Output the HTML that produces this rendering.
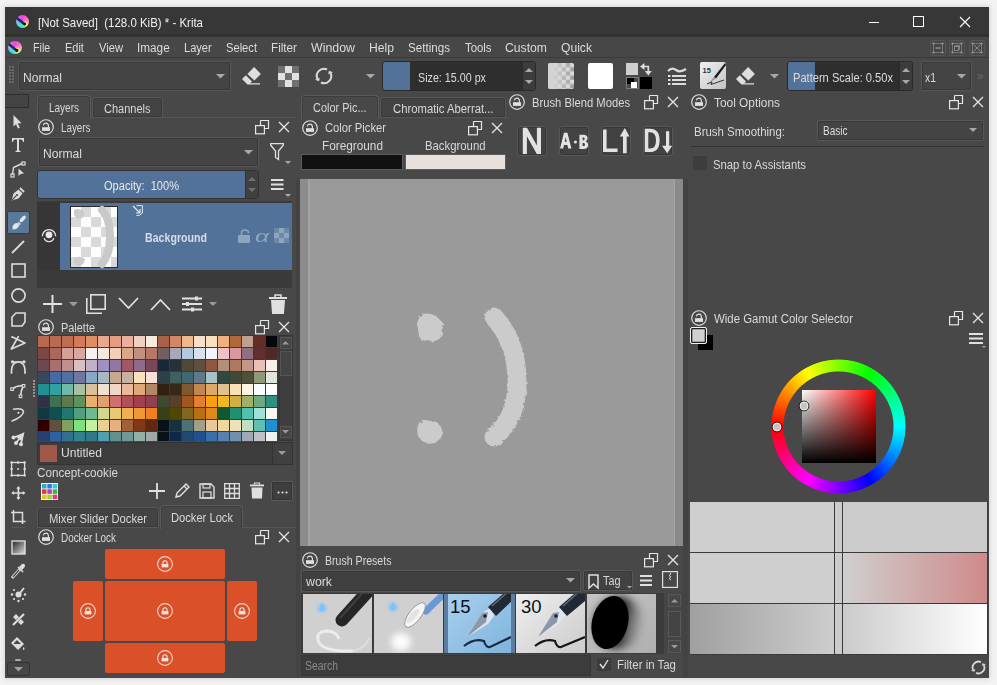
<!DOCTYPE html><html><head><meta charset="utf-8"><style>
*{margin:0;padding:0;box-sizing:border-box}
html,body{width:997px;height:685px;overflow:hidden;background:#f2f2f2;font-family:"Liberation Sans",sans-serif}
div{position:absolute}
.t{white-space:nowrap;line-height:1;transform-origin:0 0}
svg{position:absolute;overflow:visible}
</style></head><body><div style="left:0px;top:0px;width:997px;height:685px;background:#f3f3f3"></div><div style="left:5px;top:7px;width:984px;height:671px;background:#484848;box-shadow:0 0 5px 1px rgba(0,0,0,0.12)"></div><div style="left:5px;top:7px;width:984px;height:27px;background:#373737"></div><div style="left:5px;top:34px;width:984px;height:3px;background:#323232"></div><div style="left:5px;top:37px;width:984px;height:20px;background:#474747"></div><div style="left:5px;top:57px;width:984px;height:1px;background:#3b3b3b"></div><div style="left:15.5px;top:15px;width:13px;height:13px;border-radius:50%;background:conic-gradient(#ff38e8 0deg,#f080c8 70deg,#f4f070 130deg,#50e8b0 180deg,#40d8f0 230deg,#a8a8f8 290deg,#e050f0 340deg,#ff38e8 360deg)"></div><svg style="left:15.5px;top:15px;" width="13" height="13" viewBox="0 0 13 13"><path d="M1.56 3.6400000000000006L8.06 8.84" stroke="#2a2850" stroke-width="2.6" stroke-linecap="round"/><circle cx="8.58" cy="9.1" r="1.43" fill="#111"/></svg><div class="t" style="left:38.00px;top:15.5px;font-size:13px;color:#f0f0f0;transform:scaleX(0.8817);">[Not Saved]&nbsp; (128.0 KiB) * - Krita</div><div style="left:869px;top:22px;width:10px;height:1px;background:#fff"></div><div style="left:913px;top:16px;width:11px;height:11px;border:1px solid #fff"></div><svg style="left:960px;top:17px;" width="10" height="10" viewBox="0 0 10 10"><path d="M0 0L10 10M10 0L0 10" stroke="#fff" stroke-width="1.1"/></svg><div style="left:8px;top:40.5px;width:13.5px;height:13.5px;border-radius:50%;background:conic-gradient(#ff38e8 0deg,#f080c8 70deg,#f4f070 130deg,#50e8b0 180deg,#40d8f0 230deg,#a8a8f8 290deg,#e050f0 340deg,#ff38e8 360deg)"></div><svg style="left:8px;top:40.5px;" width="13.5" height="13.5" viewBox="0 0 13.5 13.5"><path d="M1.6199999999999999 3.7800000000000002L8.37 9.180000000000001" stroke="#2a2850" stroke-width="2.7" stroke-linecap="round"/><circle cx="8.91" cy="9.45" r="1.485" fill="#111"/></svg><div class="t" style="left:32.50px;top:42px;font-size:12.5px;color:#dcdcdc;transform:scaleX(0.8533);">File</div><div class="t" style="left:64.50px;top:42px;font-size:12.5px;color:#dcdcdc;transform:scaleX(0.8772);">Edit</div><div class="t" style="left:98.50px;top:42px;font-size:12.5px;color:#dcdcdc;transform:scaleX(0.8930);">View</div><div class="t" style="left:137.30px;top:42px;font-size:12.5px;color:#dcdcdc;transform:scaleX(0.9410);">Image</div><div class="t" style="left:184.30px;top:42px;font-size:12.5px;color:#dcdcdc;transform:scaleX(0.8855);">Layer</div><div class="t" style="left:226.00px;top:42px;font-size:12.5px;color:#dcdcdc;transform:scaleX(0.8921);">Select</div><div class="t" style="left:271.00px;top:42px;font-size:12.5px;color:#dcdcdc;transform:scaleX(0.9359);">Filter</div><div class="t" style="left:311.00px;top:42px;font-size:12.5px;color:#dcdcdc;transform:scaleX(0.9895);">Window</div><div class="t" style="left:369.00px;top:42px;font-size:12.5px;color:#dcdcdc;transform:scaleX(0.9721);">Help</div><div class="t" style="left:408.00px;top:42px;font-size:12.5px;color:#dcdcdc;transform:scaleX(0.9298);">Settings</div><div class="t" style="left:464.50px;top:42px;font-size:12.5px;color:#dcdcdc;transform:scaleX(0.9079);">Tools</div><div class="t" style="left:505.00px;top:42px;font-size:12.5px;color:#dcdcdc;transform:scaleX(0.9750);">Custom</div><div class="t" style="left:561.00px;top:42px;font-size:12.5px;color:#dcdcdc;transform:scaleX(0.9702);">Quick</div><div style="left:929.5px;top:39.5px;width:16px;height:16px;border:1px solid #555;border-radius:2px;background:#474747"></div><svg style="left:929.5px;top:39.5px;" width="16" height="16" viewBox="0 0 16 16"><rect x="3.5" y="3.5" width="9" height="9" stroke="#7a7a7a" stroke-width="0.9" fill="none"/><g fill="#9a9a9a"><circle cx="3.5" cy="3.5" r="1.1"/><circle cx="12.5" cy="3.5" r="1.1"/><circle cx="3.5" cy="12.5" r="1.1"/><circle cx="12.5" cy="12.5" r="1.1"/></g><rect x="5.5" y="7.3" width="5" height="1.5" fill="#8c8c8c"/></svg><div style="left:948.5px;top:39.5px;width:16px;height:16px;border:1px solid #555;border-radius:2px;background:#474747"></div><svg style="left:948.5px;top:39.5px;" width="16" height="16" viewBox="0 0 16 16"><rect x="3.5" y="3.5" width="9" height="9" stroke="#7a7a7a" stroke-width="0.9" fill="none"/><g fill="#9a9a9a"><circle cx="3.5" cy="3.5" r="1.1"/><circle cx="12.5" cy="3.5" r="1.1"/><circle cx="3.5" cy="12.5" r="1.1"/><circle cx="12.5" cy="12.5" r="1.1"/></g><rect x="5.5" y="6.5" width="4" height="4" stroke="#8c8c8c" stroke-width="0.9" fill="none"/><path d="M6.5 6V5.5H10.5V9.5H10" stroke="#8c8c8c" stroke-width="0.9" fill="none"/></svg><div style="left:969px;top:39.5px;width:16px;height:16px;border:1px solid #555;border-radius:2px;background:#474747"></div><svg style="left:969px;top:39.5px;" width="16" height="16" viewBox="0 0 16 16"><rect x="3.5" y="3.5" width="9" height="9" stroke="#7a7a7a" stroke-width="0.9" fill="none"/><g fill="#9a9a9a"><circle cx="3.5" cy="3.5" r="1.1"/><circle cx="12.5" cy="3.5" r="1.1"/><circle cx="3.5" cy="12.5" r="1.1"/><circle cx="12.5" cy="12.5" r="1.1"/></g><path d="M4.5 4.5L11.5 11.5M11.5 4.5L4.5 11.5" stroke="#8c8c8c" stroke-width="1"/></svg><div style="left:9px;top:66px;width:2px;height:2px;background:#6a6a6a"></div><div style="left:12px;top:66px;width:2px;height:2px;background:#6a6a6a"></div><div style="left:9px;top:69px;width:2px;height:2px;background:#6a6a6a"></div><div style="left:12px;top:69px;width:2px;height:2px;background:#6a6a6a"></div><div style="left:9px;top:72px;width:2px;height:2px;background:#6a6a6a"></div><div style="left:12px;top:72px;width:2px;height:2px;background:#6a6a6a"></div><div style="left:9px;top:75px;width:2px;height:2px;background:#6a6a6a"></div><div style="left:12px;top:75px;width:2px;height:2px;background:#6a6a6a"></div><div style="left:9px;top:78px;width:2px;height:2px;background:#6a6a6a"></div><div style="left:12px;top:78px;width:2px;height:2px;background:#6a6a6a"></div><div style="left:9px;top:81px;width:2px;height:2px;background:#6a6a6a"></div><div style="left:12px;top:81px;width:2px;height:2px;background:#6a6a6a"></div><div style="left:18px;top:61px;width:213px;height:30px;background:#444444;border:1px solid #575757;border-radius:2px;box-shadow:inset 0 0 0 1px #383838"></div><div class="t" style="left:22.50px;top:71.5px;font-size:12px;color:#dcdcdc;transform:scaleX(1.0085);">Normal</div><svg style="left:215.5px;top:73.75px;" width="9" height="4.5" viewBox="0 0 9 4.5"><path d="M0 0L9 0L4.5 4.5Z" fill="#a8a8a8"/></svg><svg style="left:238px;top:62px;" width="28" height="28" viewBox="0 0 28 28"><path d="M16.1 4.9L22.9 11.9L16.4 18.6L9.4 11.9Z" fill="#dedede"/><path d="M7.8 13.3L14 19.5L12.3 21.2L22 21.2L22 22.4L9.5 22.4L4 17Z" fill="#dedede"/></svg><div style="left:278px;top:66px;width:7px;height:7px;background:#707070"></div><div style="left:285px;top:66px;width:7px;height:7px;background:#e2e2e2"></div><div style="left:292px;top:66px;width:7px;height:7px;background:#707070"></div><div style="left:278px;top:73px;width:7px;height:7px;background:#e2e2e2"></div><div style="left:285px;top:73px;width:7px;height:7px;background:#707070"></div><div style="left:292px;top:73px;width:7px;height:7px;background:#e2e2e2"></div><div style="left:278px;top:80px;width:7px;height:7px;background:#707070"></div><div style="left:285px;top:80px;width:7px;height:7px;background:#e2e2e2"></div><div style="left:292px;top:80px;width:7px;height:7px;background:#707070"></div><svg style="left:315px;top:67px;" width="18" height="18" viewBox="0 0 18 18"><path d="M12.04 2.47A7.2 7.2 0 0 0 2.47 12.04" stroke="#dcdcdc" stroke-width="2" fill="none"/><path d="M4.09 14.27L-0.02 12.83L4.77 10.80Z" fill="#dcdcdc"/><path d="M5.96 15.53A7.2 7.2 0 0 0 15.53 5.96" stroke="#dcdcdc" stroke-width="2" fill="none"/><path d="M13.91 3.73L18.02 5.17L13.23 7.20Z" fill="#dcdcdc"/></svg><svg style="left:365.5px;top:73.75px;" width="9" height="4.5" viewBox="0 0 9 4.5"><path d="M0 0L9 0L4.5 4.5Z" fill="#a8a8a8"/></svg><div style="left:382px;top:61px;width:154px;height:30px;background:#2e2e2e;border:1px solid #2a2a2a;border-radius:3px"></div><div style="left:383px;top:62px;width:27px;height:28px;background:#52729a;border-radius:2px 0 0 2px"></div><div class="t" style="left:418.00px;top:72px;font-size:12px;color:#dcdcdc;transform:scaleX(0.8940);">Size: 15.00 px</div><div style="left:522px;top:62px;width:13px;height:28px;background:#3c3c3c;border-left:1px solid #2a2a2a"></div><svg style="left:524.5px;top:68.0px;" width="8" height="4.0" viewBox="0 0 8 4.0"><path d="M0 4.0L8 4.0L4.0 0Z" fill="#a8a8a8"/></svg><svg style="left:524.5px;top:80.0px;" width="8" height="4.0" viewBox="0 0 8 4.0"><path d="M0 0L8 0L4.0 4.0Z" fill="#a8a8a8"/></svg><svg style="left:548px;top:63px;" width="26" height="26" viewBox="0 0 26 26"><defs><pattern id="pc" width="8.4" height="8.4" patternUnits="userSpaceOnUse" x="1" y="0"><rect width="8.4" height="8.4" fill="#dcdcdc"/><rect width="4.2" height="4.2" fill="#9c9c9c"/><rect x="4.2" y="4.2" width="4.2" height="4.2" fill="#9c9c9c"/></pattern><linearGradient id="pcg" x1="0" x2="1"><stop offset="0" stop-color="#d4d4d4" stop-opacity="1"/><stop offset="0.25" stop-color="#d4d4d4" stop-opacity="0.9"/><stop offset="1" stop-color="#d4d4d4" stop-opacity="0"/></linearGradient></defs><rect width="26" height="26" rx="2" fill="url(#pc)"/><rect width="26" height="26" rx="2" fill="url(#pcg)"/></svg><div style="left:588px;top:63px;width:25px;height:26px;background:#fff;border-radius:2px"></div><div style="left:626px;top:63px;width:12px;height:12px;background:#cfcfcf"></div><div style="left:626px;top:77px;width:13px;height:12px;border:1px solid #7a7a7a"></div><div style="left:627px;top:78px;width:7px;height:6px;background:#000"></div><div style="left:631px;top:82px;width:6px;height:6px;background:#fff"></div><div style="left:640px;top:77px;width:12px;height:12px;background:#000"></div><svg style="left:639px;top:62px;" width="14" height="14" viewBox="0 0 14 14"><path d="M1 4.5L5.5 1V8Z" fill="#dcdcdc"/><path d="M5 4.5H9.3V9.5" stroke="#dcdcdc" stroke-width="1.7" fill="none"/><path d="M9.3 13.5L5.8 9H12.8Z" fill="#dcdcdc"/></svg><svg style="left:667px;top:66px;" width="21" height="19" viewBox="0 0 21 19"><path d="M1 5 Q5 1 9 4 T19 3" stroke="#dcdcdc" stroke-width="2.2" fill="none"/><rect x="1" y="9" width="2.5" height="2" fill="#dcdcdc"/><rect x="5" y="9" width="14" height="2" fill="#dcdcdc"/><rect x="1" y="13" width="2.5" height="2" fill="#dcdcdc"/><rect x="5" y="13" width="14" height="2" fill="#dcdcdc"/><rect x="1" y="17" width="2.5" height="2" fill="#dcdcdc"/><rect x="5" y="17" width="14" height="2" fill="#dcdcdc"/></svg><svg style="left:700px;top:62px;" width="26" height="27" viewBox="0 0 26 27"><defs><linearGradient id="bp" x1="0" y1="0" x2="1" y2="1"><stop offset="0" stop-color="#f0f0f0"/><stop offset="1" stop-color="#c4c4c4"/></linearGradient></defs><rect width="26" height="27" rx="2" fill="url(#bp)"/><text x="2.5" y="10.5" font-size="7.5" font-weight="bold" font-family="Liberation Sans" fill="#333">15</text><path d="M25 1L14 15L16 16.5L26 3Z" fill="#1a1a1a"/><path d="M14 15L8.5 21.5L16 16.5Z" fill="#9a9a9a"/><path d="M7 22L12 20L11 22.5L24 18" stroke="#333" stroke-width="1" fill="none"/></svg><svg style="left:732px;top:62px;" width="28" height="28" viewBox="0 0 28 28"><path d="M16.1 4.9L22.9 11.9L16.4 18.6L9.4 11.9Z" fill="#dedede"/><path d="M7.8 13.3L14 19.5L12.3 21.2L22 21.2L22 22.4L9.5 22.4L4 17Z" fill="#dedede"/></svg><svg style="left:769.5px;top:73.75px;" width="9" height="4.5" viewBox="0 0 9 4.5"><path d="M0 0L9 0L4.5 4.5Z" fill="#a8a8a8"/></svg><div style="left:787px;top:61px;width:126px;height:30px;background:#2e2e2e;border:1px solid #2a2a2a;border-radius:3px"></div><div style="left:788px;top:62px;width:27px;height:28px;background:#52729a;border-radius:2px 0 0 2px"></div><div class="t" style="left:793.00px;top:72px;font-size:12px;color:#dcdcdc;transform:scaleX(0.9253);">Pattern Scale: 0.50x</div><div style="left:899px;top:62px;width:13px;height:28px;background:#3c3c3c;border-left:1px solid #2a2a2a"></div><svg style="left:901.5px;top:68.0px;" width="8" height="4.0" viewBox="0 0 8 4.0"><path d="M0 4.0L8 4.0L4.0 0Z" fill="#a8a8a8"/></svg><svg style="left:901.5px;top:80.0px;" width="8" height="4.0" viewBox="0 0 8 4.0"><path d="M0 0L8 0L4.0 4.0Z" fill="#a8a8a8"/></svg><div style="left:921px;top:61px;width:51px;height:30px;background:#444444;border:1px solid #575757;border-radius:2px;box-shadow:inset 0 0 0 1px #383838"></div><div class="t" style="left:925.00px;top:72px;font-size:12px;color:#dcdcdc;transform:scaleX(0.8670);">x1</div><svg style="left:956.5px;top:73.75px;" width="9" height="4.5" viewBox="0 0 9 4.5"><path d="M0 0L9 0L4.5 4.5Z" fill="#a8a8a8"/></svg><div class="t" style="left:977.00px;top:70px;font-size:12px;color:#6a6a6a;">&raquo;</div><div style="left:5px;top:94px;width:24px;height:14px;border:1px solid #2e2e2e;border-left:none;background:#444"></div><div style="left:7px;top:211px;width:23px;height:23px;background:#5a7898;border:1px solid #2e3c4c;border-radius:2px"></div><svg style="left:8px;top:111.0px;" width="20" height="20" viewBox="0 0 20 20"><path d="M5.5 4L5.5 15.5L8 13.2L10 17.5L11.8 16.7L9.8 12.3L13.5 12.3Z" fill="#dcdcdc"/></svg><svg style="left:8px;top:135.0px;" width="20" height="20" viewBox="0 0 20 20"><path d="M4 3H16V7H15Q15 4.5 13 4.5H11V15.5L12.5 16V17H7.5V16L9 15.5V4.5H7Q5 4.5 5 7H4Z" fill="#dcdcdc"/></svg><svg style="left:8px;top:159.0px;" width="20" height="20" viewBox="0 0 20 20"><path d="M4.5 15.5L5.5 8.5L14 4.5" stroke="#dcdcdc" stroke-width="1.4" fill="none"/><rect x="3" y="15" width="3" height="3" stroke="#dcdcdc" stroke-width="1.2" fill="none"/><rect x="14" y="3" width="3" height="3" stroke="#dcdcdc" stroke-width="1.2" fill="none"/><path d="M10.5 9.5L10.5 17L12.5 15L16 14.5Z" fill="#dcdcdc"/></svg><svg style="left:8px;top:183.0px;" width="20" height="20" viewBox="0 0 20 20"><path d="M3.5 17.5L5.5 10.5L10.5 6.5L14.5 10.5L10.5 15.5Z" fill="#dcdcdc"/><path d="M4 17L8.3 12.7" stroke="#484848" stroke-width="1.1"/><circle cx="9" cy="12" r="1.1" fill="#484848"/><path d="M12 5L16 9" stroke="#dcdcdc" stroke-width="1.8"/></svg><svg style="left:8.5px;top:212.0px;" width="20" height="20" viewBox="0 0 20 20"><path d="M3.5 17.5Q3 13 6 11.5Q8 10.5 9.5 12Q10.5 13.5 9.5 15Q7.5 17.5 3.5 17.5Z" fill="#dfe6ee"/><path d="M9.2 10.6L11.2 12.6" stroke="#dfe6ee" stroke-width="1.6"/><path d="M10.5 9.5Q11 6.5 13.5 4.5Q15.5 3 16.5 4Q17.5 5 16 7Q14 9.5 12 10.5Z" fill="#dfe6ee"/></svg><svg style="left:8px;top:237.0px;" width="20" height="20" viewBox="0 0 20 20"><path d="M4 16L16 4" stroke="#dcdcdc" stroke-width="1.8"/></svg><svg style="left:8px;top:260.0px;" width="20" height="20" viewBox="0 0 20 20"><rect x="4" y="4" width="13" height="13" stroke="#dcdcdc" stroke-width="1.6" fill="none"/></svg><svg style="left:8px;top:285.0px;" width="20" height="20" viewBox="0 0 20 20"><circle cx="10.5" cy="10.5" r="6.6" stroke="#dcdcdc" stroke-width="1.6" fill="none"/></svg><svg style="left:8px;top:309.0px;" width="20" height="20" viewBox="0 0 20 20"><path d="M4 8L8 4H17V13L14 17H4Z" stroke="#dcdcdc" stroke-width="1.6" fill="none"/></svg><svg style="left:8px;top:333.0px;" width="20" height="20" viewBox="0 0 20 20"><path d="M3.3 3.5L17 10L3.3 16L10.6 3.2" stroke="#dcdcdc" stroke-width="1.7" fill="none" stroke-linejoin="round"/></svg><svg style="left:8px;top:357.0px;" width="20" height="20" viewBox="0 0 20 20"><path d="M3.5 16.8Q3 5 10.3 5Q17.5 5 17 16.8" stroke="#dcdcdc" stroke-width="1.7" fill="none"/><path d="M4.5 4.8H16" stroke="#dcdcdc" stroke-width="1"/><circle cx="4.5" cy="4.8" r="1.6" fill="#dcdcdc"/><circle cx="16" cy="4.8" r="1.6" fill="#dcdcdc"/></svg><svg style="left:8px;top:380.0px;" width="20" height="20" viewBox="0 0 20 20"><path d="M4 9.3Q9 5 15.4 6Q13 10 12.6 15.8" stroke="#dcdcdc" stroke-width="1.6" fill="none"/><rect x="2.8" y="7.8" width="2.6" height="2.6" stroke="#dcdcdc" stroke-width="1.1" fill="#484848"/><rect x="14.2" y="4.5" width="2.6" height="2.6" stroke="#dcdcdc" stroke-width="1.1" fill="#484848"/><rect x="11.2" y="15" width="2.6" height="2.6" stroke="#dcdcdc" stroke-width="1.1" fill="#484848"/></svg><svg style="left:8px;top:405.0px;" width="20" height="20" viewBox="0 0 20 20"><path d="M5 4.3Q14 2.5 15.5 6.5Q15 12 3.5 16.2" stroke="#dcdcdc" stroke-width="1.6" fill="none"/><circle cx="10.4" cy="7.8" r="1.1" fill="#dcdcdc"/></svg><svg style="left:8px;top:429.0px;" width="20" height="20" viewBox="0 0 20 20"><path d="M16.5 3L14 12L8 8Z" fill="#dcdcdc"/><path d="M15 5L5.5 8.5M15 5L8 14M15 5L13 15" stroke="#dcdcdc" stroke-width="1.8"/><circle cx="5.5" cy="8.5" r="2" fill="#dcdcdc"/><circle cx="8" cy="14" r="2" fill="#dcdcdc"/><circle cx="13" cy="15.3" r="2" fill="#dcdcdc"/></svg><svg style="left:8px;top:459.0px;" width="20" height="20" viewBox="0 0 20 20"><rect x="3.6" y="3.5" width="13" height="12.9" stroke="#dcdcdc" stroke-width="1.3" fill="none"/><g fill="#dcdcdc"><circle cx="3.6" cy="3.5" r="1.2"/><circle cx="3.6" cy="10" r="1.2"/><circle cx="3.6" cy="16.4" r="1.2"/><circle cx="10.1" cy="3.5" r="1.2"/><circle cx="10.1" cy="16.4" r="1.2"/><circle cx="16.6" cy="3.5" r="1.2"/><circle cx="16.6" cy="10" r="1.2"/><circle cx="16.6" cy="16.4" r="1.2"/><circle cx="10.1" cy="10" r="1"/></g></svg><svg style="left:8px;top:483.0px;" width="20" height="20" viewBox="0 0 20 20"><path d="M10.4 4.5V15.5M4.5 10H16.3" stroke="#dcdcdc" stroke-width="1.7"/><path d="M10.4 3L8.3 5.8H12.5ZM10.4 17L8.3 14.2H12.5ZM3.3 10L6 7.9V12.1ZM17.5 10L14.8 7.9V12.1Z" fill="#dcdcdc"/></svg><svg style="left:8px;top:507.0px;" width="20" height="20" viewBox="0 0 20 20"><path d="M5.5 3V14.5H17.5M3 5.5H14.5V17" stroke="#dcdcdc" stroke-width="1.5" fill="none"/></svg><svg style="left:8px;top:537.0px;" width="20" height="20" viewBox="0 0 20 20"><defs><linearGradient id="gr" x1="0" y1="0" x2="1" y2="1"><stop offset="0" stop-color="#222"/><stop offset="1" stop-color="#ddd"/></linearGradient></defs><rect x="4" y="4" width="13" height="13" fill="url(#gr)" stroke="#dcdcdc" stroke-width="1.4"/></svg><svg style="left:8px;top:561.0px;" width="20" height="20" viewBox="0 0 20 20"><path d="M4 17L12 8" stroke="#dcdcdc" stroke-width="3"/><path d="M5 16L11 9" stroke="#484848" stroke-width="1.2"/><path d="M11 6L14 3Q16 2 17 4Q17.5 6 15 8L14 9Z" fill="#dcdcdc"/><path d="M10 6L15 11" stroke="#dcdcdc" stroke-width="1.6"/></svg><svg style="left:8px;top:584.0px;" width="20" height="20" viewBox="0 0 20 20"><g fill="#dcdcdc"><circle cx="10.5" cy="10.5" r="3"/><circle cx="4" cy="10.5" r="1.2"/><circle cx="17" cy="10.5" r="1.2"/><circle cx="10.5" cy="17" r="1.2"/><circle cx="6" cy="6" r="1.1"/><circle cx="6" cy="15" r="1.1"/><circle cx="15" cy="15" r="1.1"/></g><path d="M12 9L16 4" stroke="#dcdcdc" stroke-width="2"/></svg><svg style="left:8px;top:609.0px;" width="20" height="20" viewBox="0 0 20 20"><path d="M5 8L8 5L11 8L8 11ZM10 13L13 10L16 13L13 16Z" fill="#dcdcdc"/><path d="M5 16L16 5" stroke="#dcdcdc" stroke-width="2.2"/></svg><svg style="left:8px;top:633.0px;" width="20" height="20" viewBox="0 0 20 20"><path d="M3 10L9 4L16 11L10 17Z" fill="#dcdcdc"/><path d="M6 10L9 7L13 11H6Z" fill="#484848"/><path d="M16 14Q17 16 16 17Q14.5 17 15 15Z" fill="#dcdcdc"/></svg><div style="left:15px;top:659px;width:6px;height:2px;background:#aaa;border-radius:1px"></div><div style="left:12px;top:527px;width:13px;height:1px;background:#585858"></div><div style="left:7px;top:662px;width:23px;height:14px;border:1px solid #333;background:#454545;border-radius:2px"></div><svg style="left:14.0px;top:666.75px;" width="9" height="4.5" viewBox="0 0 9 4.5"><path d="M0 0L9 0L4.5 4.5Z" fill="#a0a0a0"/></svg><div style="left:162px;top:117px;width:134px;height:1px;background:#555"></div><div style="left:92px;top:97px;width:71px;height:21px;background:#434343;border:1px solid #575757;border-bottom:1px solid #575757;border-radius:3px 3px 0 0;box-shadow:inset 0 0 0 1px #3a3a3a"></div><div class="t" style="left:104.00px;top:103px;font-size:12px;color:#d8d8d8;transform:scaleX(0.9171);">Channels</div><div style="left:37px;top:95px;width:54px;height:24px;background:#484848;border:1px solid #5a5a5a;border-bottom:none;border-radius:4px 4px 0 0;box-shadow:inset 0 0 0 1px #3c3c3c"></div><div style="left:38px;top:117px;width:52px;height:3px;background:#484848"></div><div class="t" style="left:48.50px;top:102px;font-size:12px;color:#d8d8d8;transform:scaleX(0.8326);">Layers</div><svg style="left:38px;top:119px;" width="16" height="16" viewBox="0 0 16 16"><circle cx="8" cy="8" r="7.3" stroke="#e0e0e0" stroke-width="1.15" fill="none"/><rect x="4" y="8.2" width="8" height="3.7" fill="#e0e0e0"/><path d="M5.3 6.4A2.6 2.6 0 0 1 10.4 6.2V8.4" stroke="#e0e0e0" stroke-width="1.15" fill="none"/></svg><div class="t" style="left:61.00px;top:122px;font-size:12px;color:#dadada;transform:scaleX(0.8187);">Layers</div><svg style="left:255px;top:120px;" width="14" height="14" viewBox="0 0 14 14"><path d="M5.5 0.5H13.5V8.5H9.5" stroke="#e6e6e6" stroke-width="1.2" fill="none"/><rect x="0.6" y="5.6" width="8.8" height="8.2" stroke="#e6e6e6" stroke-width="1.2" fill="none"/><path d="M5.5 5.5V0.5" stroke="#e6e6e6" stroke-width="1.2"/></svg><svg style="left:279px;top:122px;" width="10" height="10" viewBox="0 0 10 10"><path d="M0 0L10 10M10 0L0 10" stroke="#e6e6e6" stroke-width="1.3"/></svg><div style="left:38px;top:137px;width:221px;height:30px;background:#444444;border:1px solid #575757;border-radius:2px;box-shadow:inset 0 0 0 1px #383838"></div><div class="t" style="left:43.00px;top:148px;font-size:12px;color:#dcdcdc;transform:scaleX(1.0085);">Normal</div><svg style="left:244.0px;top:149.75px;" width="9" height="4.5" viewBox="0 0 9 4.5"><path d="M0 0L9 0L4.5 4.5Z" fill="#a8a8a8"/></svg><svg style="left:270px;top:143px;" width="14" height="18" viewBox="0 0 14 18"><path d="M0.7 0.7H13.3V2.2L8.5 8V16.5L5.5 14.5V8L0.7 2.2Z" stroke="#e0e0e0" stroke-width="1.3" fill="none"/></svg><svg style="left:285.0px;top:161.0px;" width="6" height="3.0" viewBox="0 0 6 3.0"><path d="M0 0L6 0L3.0 3.0Z" fill="#a8a8a8"/></svg><div style="left:37px;top:170px;width:222px;height:29px;background:#3a3a3a;border:1px solid #333;border-radius:3px"></div><div style="left:38px;top:171px;width:207px;height:27px;background:#52729a;border-radius:2px 0 0 2px"></div><div class="t" style="left:104.00px;top:180px;font-size:12px;color:#e8e8e8;transform:scaleX(0.9217);">Opacity:&nbsp; 100%</div><div style="left:245px;top:171px;width:13px;height:27px;background:#404040;border-left:1px solid #333"></div><svg style="left:247.5px;top:177.0px;" width="8" height="4.0" viewBox="0 0 8 4.0"><path d="M0 4.0L8 4.0L4.0 0Z" fill="#707070"/></svg><svg style="left:247.5px;top:188.0px;" width="8" height="4.0" viewBox="0 0 8 4.0"><path d="M0 0L8 0L4.0 4.0Z" fill="#707070"/></svg><svg style="left:271px;top:179px;" width="13" height="12" viewBox="0 0 13 12"><rect y="0" width="12.5" height="2" fill="#e0e0e0"/><rect y="4.5" width="12.5" height="2" fill="#e0e0e0"/><rect y="9" width="12.5" height="2" fill="#e0e0e0"/></svg><svg style="left:285.0px;top:194.0px;" width="6" height="3.0" viewBox="0 0 6 3.0"><path d="M0 0L6 0L3.0 3.0Z" fill="#a8a8a8"/></svg><div style="left:37px;top:201px;width:255px;height:87px;background:#3a3a3a"></div><div style="left:37px;top:202px;width:23px;height:68px;background:#363636"></div><div style="left:60px;top:203px;width:232px;height:67px;background:#52729a"></div><svg style="left:41px;top:228px;" width="16" height="16" viewBox="0 0 16 16"><path d="M1.3 8.3A6.7 6.7 0 0 1 14.7 8.3" stroke="#e8e8e8" stroke-width="1.3" fill="none"/><path d="M3.2 10A5 5 0 0 0 12.8 10" stroke="#e8e8e8" stroke-width="1.2" fill="none"/><circle cx="8" cy="6.8" r="3.4" fill="#e8e8e8"/></svg><svg style="left:70px;top:206px;" width="48" height="62" viewBox="0 0 48 62"><rect x="0" y="0" width="48" height="62" fill="#2a2a2a"/><rect x="1" y="1" width="46" height="60" fill="#fdfdfd"/><rect x="11" y="1" width="10" height="10" fill="#d9d9d9"/><rect x="31" y="1" width="10" height="10" fill="#d9d9d9"/><rect x="1" y="11" width="10" height="10" fill="#d9d9d9"/><rect x="21" y="11" width="10" height="10" fill="#d9d9d9"/><rect x="41" y="11" width="6" height="10" fill="#d9d9d9"/><rect x="11" y="21" width="10" height="10" fill="#d9d9d9"/><rect x="31" y="21" width="10" height="10" fill="#d9d9d9"/><rect x="1" y="31" width="10" height="10" fill="#d9d9d9"/><rect x="21" y="31" width="10" height="10" fill="#d9d9d9"/><rect x="41" y="31" width="6" height="10" fill="#d9d9d9"/><rect x="11" y="41" width="10" height="10" fill="#d9d9d9"/><rect x="31" y="41" width="10" height="10" fill="#d9d9d9"/><rect x="1" y="51" width="10" height="10" fill="#d9d9d9"/><rect x="21" y="51" width="10" height="10" fill="#d9d9d9"/><rect x="41" y="51" width="6" height="10" fill="#d9d9d9"/><path d="M4 4Q9 1 14 6Q15 12 9 13Q3 12 4 4Z" fill="#cbcbcb"/><path d="M4 52Q10 49 15 53Q14 60 8 60Q3 58 4 52Z" fill="#cbcbcb"/><path d="M32 4Q40 12 40 30Q40 48 32 58" stroke="#c9c9c9" stroke-width="8" fill="none" stroke-linecap="round"/></svg><svg style="left:132px;top:205px;" width="11" height="11" viewBox="0 0 11 11"><path d="M1 1L8 8M8 4V8H4" stroke="#e0e8f0" stroke-width="1.2" fill="none"/><path d="M4.5 0.6H10.4V8L7.5 10.4H4.5" stroke="#e0e8f0" stroke-width="1" fill="none"/></svg><div class="t" style="left:145.00px;top:232px;font-size:12px;color:#d6dee8;transform:scaleX(0.8855);font-weight:bold">Background</div><svg style="left:237px;top:229px;" width="14" height="15" viewBox="0 0 14 15"><rect x="1" y="6" width="12" height="8" rx="1" fill="#8ea5bf"/><path d="M3 6V4Q3 1 6.5 1Q10 1 10 4" stroke="#8ea5bf" stroke-width="1.6" fill="none" transform="translate(1.5,0)"/></svg><div class="t" style="left:255.00px;top:228px;font-size:17px;color:#8ea5bf;transform:scaleX(1.4428);font-style:italic">&alpha;</div><svg style="left:274px;top:228px;" width="16" height="16" viewBox="0 0 16 16"><g fill="#8ea5bf"><rect x="5" y="0" width="5" height="5"/><rect x="0" y="5" width="5" height="5"/><rect x="10" y="5" width="5" height="5"/><rect x="5" y="10" width="5" height="5"/></g><g fill="#6e88a6"><rect x="0" y="0" width="5" height="5"/><rect x="10" y="0" width="5" height="5"/><rect x="5" y="5" width="5" height="5"/><rect x="0" y="10" width="5" height="5"/><rect x="10" y="10" width="5" height="5"/></g></svg><svg style="left:43px;top:295px;" width="19" height="18" viewBox="0 0 19 18"><path d="M9.5 0V18M0 9H19" stroke="#e0e0e0" stroke-width="2"/></svg><svg style="left:68.5px;top:301.75px;" width="9" height="4.5" viewBox="0 0 9 4.5"><path d="M0 0L9 0L4.5 4.5Z" fill="#9a9a9a"/></svg><svg style="left:86px;top:294px;" width="20" height="20" viewBox="0 0 20 20"><rect x="4.8" y="0.8" width="14.4" height="14.4" stroke="#e0e0e0" stroke-width="1.6" fill="none"/><path d="M0.8 4V19.2H16" stroke="#e0e0e0" stroke-width="1.6" fill="none"/></svg><svg style="left:118px;top:297px;" width="21" height="13" viewBox="0 0 21 13"><path d="M1 1L10.5 11L20 1" stroke="#e0e0e0" stroke-width="1.8" fill="none"/></svg><svg style="left:150px;top:298px;" width="21" height="13" viewBox="0 0 21 13"><path d="M1 12L10.5 2L20 12" stroke="#e0e0e0" stroke-width="1.8" fill="none"/></svg><svg style="left:182px;top:296px;" width="21" height="16" viewBox="0 0 21 16"><g stroke="#e0e0e0" stroke-width="1.8"><path d="M0 2.5H20M0 8H20M0 13.5H20"/></g><g fill="#e0e0e0"><rect x="13" y="0.5" width="3" height="4"/><rect x="4" y="6" width="3" height="4"/><rect x="9" y="11.5" width="3" height="4"/></g></svg><svg style="left:209.0px;top:302.0px;" width="8" height="4.0" viewBox="0 0 8 4.0"><path d="M0 0L8 0L4.0 4.0Z" fill="#9a9a9a"/></svg><svg style="left:269px;top:294px;" width="18" height="20" viewBox="0 0 18 20"><rect x="0" y="3" width="18" height="2" fill="#e0e0e0"/><path d="M6 3V1H12V3" stroke="#e0e0e0" stroke-width="1.5" fill="none"/><path d="M2 6H16L15 19.5Q15 20 14 20H4Q3 20 3 19.5Z" fill="#e0e0e0"/></svg><svg style="left:38px;top:319px;" width="16" height="16" viewBox="0 0 16 16"><circle cx="8" cy="8" r="7.3" stroke="#e0e0e0" stroke-width="1.15" fill="none"/><rect x="4" y="8.2" width="8" height="3.7" fill="#e0e0e0"/><path d="M5.3 6.4A2.6 2.6 0 0 1 10.4 6.2V8.4" stroke="#e0e0e0" stroke-width="1.15" fill="none"/></svg><div class="t" style="left:61.00px;top:322px;font-size:12px;color:#dadada;transform:scaleX(0.9101);">Palette</div><svg style="left:255px;top:320px;" width="14" height="14" viewBox="0 0 14 14"><path d="M5.5 0.5H13.5V8.5H9.5" stroke="#e6e6e6" stroke-width="1.2" fill="none"/><rect x="0.6" y="5.6" width="8.8" height="8.2" stroke="#e6e6e6" stroke-width="1.2" fill="none"/><path d="M5.5 5.5V0.5" stroke="#e6e6e6" stroke-width="1.2"/></svg><svg style="left:279px;top:322px;" width="10" height="10" viewBox="0 0 10 10"><path d="M0 0L10 10M10 0L0 10" stroke="#e6e6e6" stroke-width="1.3"/></svg><div style="left:37px;top:335px;width:242px;height:106px;background:#3a3a3a;overflow:hidden"><div style="left:1px;top:1px;width:11px;height:11px;background:#b5694f"></div><div style="left:13px;top:1px;width:11px;height:11px;background:#b86b52"></div><div style="left:25px;top:1px;width:11px;height:11px;background:#bf6d50"></div><div style="left:37px;top:1px;width:11px;height:11px;background:#d47a5a"></div><div style="left:49px;top:1px;width:11px;height:11px;background:#e08c64"></div><div style="left:61px;top:1px;width:11px;height:11px;background:#e8a890"></div><div style="left:73px;top:1px;width:11px;height:11px;background:#e69c80"></div><div style="left:85px;top:1px;width:11px;height:11px;background:#e8b09c"></div><div style="left:97px;top:1px;width:11px;height:11px;background:#f0d0c0"></div><div style="left:109px;top:1px;width:11px;height:11px;background:#f8ece0"></div><div style="left:121px;top:1px;width:11px;height:11px;background:#a86048"></div><div style="left:133px;top:1px;width:11px;height:11px;background:#d08868"></div><div style="left:145px;top:1px;width:11px;height:11px;background:#f0b888"></div><div style="left:157px;top:1px;width:11px;height:11px;background:#f8e0c8"></div><div style="left:169px;top:1px;width:11px;height:11px;background:#f8e0c0"></div><div style="left:181px;top:1px;width:11px;height:11px;background:#f0b080"></div><div style="left:193px;top:1px;width:11px;height:11px;background:#b06838"></div><div style="left:205px;top:1px;width:11px;height:11px;background:#c0a090"></div><div style="left:217px;top:1px;width:11px;height:11px;background:#603028"></div><div style="left:229px;top:1px;width:11px;height:11px;background:#080808"></div><div style="left:1px;top:13px;width:11px;height:11px;background:#7a4840"></div><div style="left:13px;top:13px;width:11px;height:11px;background:#a8685c"></div><div style="left:25px;top:13px;width:11px;height:11px;background:#d4a098"></div><div style="left:37px;top:13px;width:11px;height:11px;background:#d8a8a0"></div><div style="left:49px;top:13px;width:11px;height:11px;background:#f8f0f0"></div><div style="left:61px;top:13px;width:11px;height:11px;background:#f5e8dc"></div><div style="left:73px;top:13px;width:11px;height:11px;background:#f0d0b8"></div><div style="left:85px;top:13px;width:11px;height:11px;background:#d8a888"></div><div style="left:97px;top:13px;width:11px;height:11px;background:#c09080"></div><div style="left:109px;top:13px;width:11px;height:11px;background:#b87868"></div><div style="left:121px;top:13px;width:11px;height:11px;background:#706060"></div><div style="left:133px;top:13px;width:11px;height:11px;background:#a8a8b8"></div><div style="left:145px;top:13px;width:11px;height:11px;background:#b0c8e0"></div><div style="left:157px;top:13px;width:11px;height:11px;background:#d8e0f0"></div><div style="left:169px;top:13px;width:11px;height:11px;background:#f0f4fc"></div><div style="left:181px;top:13px;width:11px;height:11px;background:#f0c0c8"></div><div style="left:193px;top:13px;width:11px;height:11px;background:#d898a0"></div><div style="left:205px;top:13px;width:11px;height:11px;background:#907080"></div><div style="left:217px;top:13px;width:11px;height:11px;background:#603030"></div><div style="left:229px;top:13px;width:11px;height:11px;background:#502828"></div><div style="left:1px;top:25px;width:11px;height:11px;background:#6c4850"></div><div style="left:13px;top:25px;width:11px;height:11px;background:#a87070"></div><div style="left:25px;top:25px;width:11px;height:11px;background:#c09090"></div><div style="left:37px;top:25px;width:11px;height:11px;background:#d8c0c0"></div><div style="left:49px;top:25px;width:11px;height:11px;background:#c0b0c8"></div><div style="left:61px;top:25px;width:11px;height:11px;background:#a090c0"></div><div style="left:73px;top:25px;width:11px;height:11px;background:#9078a0"></div><div style="left:85px;top:25px;width:11px;height:11px;background:#a05868"></div><div style="left:97px;top:25px;width:11px;height:11px;background:#906888"></div><div style="left:109px;top:25px;width:11px;height:11px;background:#784858"></div><div style="left:121px;top:25px;width:11px;height:11px;background:#182838"></div><div style="left:133px;top:25px;width:11px;height:11px;background:#283038"></div><div style="left:145px;top:25px;width:11px;height:11px;background:#504838"></div><div style="left:157px;top:25px;width:11px;height:11px;background:#605040"></div><div style="left:169px;top:25px;width:11px;height:11px;background:#905840"></div><div style="left:181px;top:25px;width:11px;height:11px;background:#b09078"></div><div style="left:193px;top:25px;width:11px;height:11px;background:#b07860"></div><div style="left:205px;top:25px;width:11px;height:11px;background:#c09888"></div><div style="left:217px;top:25px;width:11px;height:11px;background:#e8c0b8"></div><div style="left:229px;top:25px;width:11px;height:11px;background:#f8f0e8"></div><div style="left:1px;top:37px;width:11px;height:11px;background:#384858"></div><div style="left:13px;top:37px;width:11px;height:11px;background:#4868a0"></div><div style="left:25px;top:37px;width:11px;height:11px;background:#5070a0"></div><div style="left:37px;top:37px;width:11px;height:11px;background:#7078a0"></div><div style="left:49px;top:37px;width:11px;height:11px;background:#88a8c8"></div><div style="left:61px;top:37px;width:11px;height:11px;background:#a8b8c0"></div><div style="left:73px;top:37px;width:11px;height:11px;background:#c8a890"></div><div style="left:85px;top:37px;width:11px;height:11px;background:#c8b0a0"></div><div style="left:97px;top:37px;width:11px;height:11px;background:#f8e0c0"></div><div style="left:109px;top:37px;width:11px;height:11px;background:#f8e0d8"></div><div style="left:121px;top:37px;width:11px;height:11px;background:#304048"></div><div style="left:133px;top:37px;width:11px;height:11px;background:#406060"></div><div style="left:145px;top:37px;width:11px;height:11px;background:#406870"></div><div style="left:157px;top:37px;width:11px;height:11px;background:#607888"></div><div style="left:169px;top:37px;width:11px;height:11px;background:#a8c0c8"></div><div style="left:181px;top:37px;width:11px;height:11px;background:#304840"></div><div style="left:193px;top:37px;width:11px;height:11px;background:#404838"></div><div style="left:205px;top:37px;width:11px;height:11px;background:#505038"></div><div style="left:217px;top:37px;width:11px;height:11px;background:#909878"></div><div style="left:229px;top:37px;width:11px;height:11px;background:#e0e4e0"></div><div style="left:1px;top:49px;width:11px;height:11px;background:#209090"></div><div style="left:13px;top:49px;width:11px;height:11px;background:#30a0a0"></div><div style="left:25px;top:49px;width:11px;height:11px;background:#70b8a8"></div><div style="left:37px;top:49px;width:11px;height:11px;background:#a8c0a0"></div><div style="left:49px;top:49px;width:11px;height:11px;background:#d8c098"></div><div style="left:61px;top:49px;width:11px;height:11px;background:#f0e0d0"></div><div style="left:73px;top:49px;width:11px;height:11px;background:#f0d8c8"></div><div style="left:85px;top:49px;width:11px;height:11px;background:#e8b898"></div><div style="left:97px;top:49px;width:11px;height:11px;background:#e0a878"></div><div style="left:109px;top:49px;width:11px;height:11px;background:#b08868"></div><div style="left:121px;top:49px;width:11px;height:11px;background:#302010"></div><div style="left:133px;top:49px;width:11px;height:11px;background:#382818"></div><div style="left:145px;top:49px;width:11px;height:11px;background:#805830"></div><div style="left:157px;top:49px;width:11px;height:11px;background:#c08850"></div><div style="left:169px;top:49px;width:11px;height:11px;background:#e0a868"></div><div style="left:181px;top:49px;width:11px;height:11px;background:#e0c090"></div><div style="left:193px;top:49px;width:11px;height:11px;background:#f8e0b8"></div><div style="left:205px;top:49px;width:11px;height:11px;background:#fcf4e0"></div><div style="left:217px;top:49px;width:11px;height:11px;background:#f8fcfc"></div><div style="left:229px;top:49px;width:11px;height:11px;background:#ffffff"></div><div style="left:1px;top:61px;width:11px;height:11px;background:#303048"></div><div style="left:13px;top:61px;width:11px;height:11px;background:#407050"></div><div style="left:25px;top:61px;width:11px;height:11px;background:#607850"></div><div style="left:37px;top:61px;width:11px;height:11px;background:#609060"></div><div style="left:49px;top:61px;width:11px;height:11px;background:#e8b070"></div><div style="left:61px;top:61px;width:11px;height:11px;background:#e0a070"></div><div style="left:73px;top:61px;width:11px;height:11px;background:#d07070"></div><div style="left:85px;top:61px;width:11px;height:11px;background:#b05058"></div><div style="left:97px;top:61px;width:11px;height:11px;background:#a04050"></div><div style="left:109px;top:61px;width:11px;height:11px;background:#904050"></div><div style="left:121px;top:61px;width:11px;height:11px;background:#404830"></div><div style="left:133px;top:61px;width:11px;height:11px;background:#584028"></div><div style="left:145px;top:61px;width:11px;height:11px;background:#a05820"></div><div style="left:157px;top:61px;width:11px;height:11px;background:#e08030"></div><div style="left:169px;top:61px;width:11px;height:11px;background:#f8a010"></div><div style="left:181px;top:61px;width:11px;height:11px;background:#f0b820"></div><div style="left:193px;top:61px;width:11px;height:11px;background:#d0b040"></div><div style="left:205px;top:61px;width:11px;height:11px;background:#a0b068"></div><div style="left:217px;top:61px;width:11px;height:11px;background:#70a880"></div><div style="left:229px;top:61px;width:11px;height:11px;background:#309080"></div><div style="left:1px;top:73px;width:11px;height:11px;background:#103840"></div><div style="left:13px;top:73px;width:11px;height:11px;background:#105050"></div><div style="left:25px;top:73px;width:11px;height:11px;background:#207870"></div><div style="left:37px;top:73px;width:11px;height:11px;background:#50a080"></div><div style="left:49px;top:73px;width:11px;height:11px;background:#70b890"></div><div style="left:61px;top:73px;width:11px;height:11px;background:#d0d890"></div><div style="left:73px;top:73px;width:11px;height:11px;background:#e8c870"></div><div style="left:85px;top:73px;width:11px;height:11px;background:#f0b050"></div><div style="left:97px;top:73px;width:11px;height:11px;background:#f09838"></div><div style="left:109px;top:73px;width:11px;height:11px;background:#f08020"></div><div style="left:121px;top:73px;width:11px;height:11px;background:#384018"></div><div style="left:133px;top:73px;width:11px;height:11px;background:#504800"></div><div style="left:145px;top:73px;width:11px;height:11px;background:#806820"></div><div style="left:157px;top:73px;width:11px;height:11px;background:#b87010"></div><div style="left:169px;top:73px;width:11px;height:11px;background:#e08820"></div><div style="left:181px;top:73px;width:11px;height:11px;background:#105830"></div><div style="left:193px;top:73px;width:11px;height:11px;background:#209070"></div><div style="left:205px;top:73px;width:11px;height:11px;background:#50c0b0"></div><div style="left:217px;top:73px;width:11px;height:11px;background:#a0e0d8"></div><div style="left:229px;top:73px;width:11px;height:11px;background:#f8f8f0"></div><div style="left:1px;top:85px;width:11px;height:11px;background:#300000"></div><div style="left:13px;top:85px;width:11px;height:11px;background:#605040"></div><div style="left:25px;top:85px;width:11px;height:11px;background:#80a060"></div><div style="left:37px;top:85px;width:11px;height:11px;background:#80e080"></div><div style="left:49px;top:85px;width:11px;height:11px;background:#c0f0a0"></div><div style="left:61px;top:85px;width:11px;height:11px;background:#e8d090"></div><div style="left:73px;top:85px;width:11px;height:11px;background:#e8b080"></div><div style="left:85px;top:85px;width:11px;height:11px;background:#a06038"></div><div style="left:97px;top:85px;width:11px;height:11px;background:#803818"></div><div style="left:109px;top:85px;width:11px;height:11px;background:#602810"></div><div style="left:121px;top:85px;width:11px;height:11px;background:#081018"></div><div style="left:133px;top:85px;width:11px;height:11px;background:#183040"></div><div style="left:145px;top:85px;width:11px;height:11px;background:#507078"></div><div style="left:157px;top:85px;width:11px;height:11px;background:#a0a088"></div><div style="left:169px;top:85px;width:11px;height:11px;background:#e8c898"></div><div style="left:181px;top:85px;width:11px;height:11px;background:#f0d898"></div><div style="left:193px;top:85px;width:11px;height:11px;background:#f0e0b8"></div><div style="left:205px;top:85px;width:11px;height:11px;background:#c0e0c0"></div><div style="left:217px;top:85px;width:11px;height:11px;background:#60c0b0"></div><div style="left:229px;top:85px;width:11px;height:11px;background:#2090d0"></div><div style="left:1px;top:97px;width:11px;height:11px;background:#284070"></div><div style="left:13px;top:97px;width:11px;height:11px;background:#3060a0"></div><div style="left:25px;top:97px;width:11px;height:11px;background:#307090"></div><div style="left:37px;top:97px;width:11px;height:11px;background:#308090"></div><div style="left:49px;top:97px;width:11px;height:11px;background:#307888"></div><div style="left:61px;top:97px;width:11px;height:11px;background:#50a0b0"></div><div style="left:73px;top:97px;width:11px;height:11px;background:#609090"></div><div style="left:85px;top:97px;width:11px;height:11px;background:#709898"></div><div style="left:97px;top:97px;width:11px;height:11px;background:#90b0a8"></div><div style="left:109px;top:97px;width:11px;height:11px;background:#a0a8a8"></div><div style="left:121px;top:97px;width:11px;height:11px;background:#081018"></div><div style="left:133px;top:97px;width:11px;height:11px;background:#102848"></div><div style="left:145px;top:97px;width:11px;height:11px;background:#204870"></div><div style="left:157px;top:97px;width:11px;height:11px;background:#205090"></div><div style="left:169px;top:97px;width:11px;height:11px;background:#3870a8"></div><div style="left:181px;top:97px;width:11px;height:11px;background:#5880b0"></div><div style="left:193px;top:97px;width:11px;height:11px;background:#7090b0"></div><div style="left:205px;top:97px;width:11px;height:11px;background:#a0a8b8"></div><div style="left:217px;top:97px;width:11px;height:11px;background:#c0c0c8"></div><div style="left:229px;top:97px;width:11px;height:11px;background:#f0f0f0"></div></div><div style="left:279px;top:335px;width:14px;height:106px;background:#3e3e3e;border:1px solid #353535"></div><div style="left:279.5px;top:337px;width:12.5px;height:12px;background:#454545;border:1px solid #555"></div><svg style="left:282.2px;top:341.25px;" width="7" height="3.5" viewBox="0 0 7 3.5"><path d="M0 3.5L7 3.5L3.5 0Z" fill="#9a9a9a"/></svg><div style="left:279.5px;top:351px;width:12.5px;height:25px;background:#444;border:1px solid #555"></div><div style="left:279.5px;top:426px;width:12.5px;height:12px;background:#454545;border:1px solid #555"></div><svg style="left:282.2px;top:430.25px;" width="7" height="3.5" viewBox="0 0 7 3.5"><path d="M0 0L7 0L3.5 3.5Z" fill="#9a9a9a"/></svg><div style="left:37px;top:442px;width:256px;height:23px;background:#3c3c3c;border:1px solid #333"></div><div style="left:40px;top:445px;width:17px;height:17px;background:#a0584a"></div><div class="t" style="left:61.00px;top:447px;font-size:12px;color:#dcdcdc;transform:scaleX(1.0077);">Untitled</div><div style="left:272px;top:443px;width:20px;height:21px;border-left:1px solid #333;background:#404040"></div><svg style="left:278.0px;top:451.0px;" width="8" height="4.0" viewBox="0 0 8 4.0"><path d="M0 0L8 0L4.0 4.0Z" fill="#9a9a9a"/></svg><div class="t" style="left:37.00px;top:467px;font-size:12px;color:#d8d8d8;transform:scaleX(0.9713);">Concept-cookie</div><svg style="left:41px;top:483px;" width="17" height="17" viewBox="0 0 17 17"><rect width="17" height="17" fill="#f4f4f4"/><rect x="1.00" y="1.00" width="4.5" height="4.5" fill="#30a8c8"/><rect x="6.33" y="1.00" width="4.5" height="4.5" fill="#2a78e0"/><rect x="11.66" y="1.00" width="4.5" height="4.5" fill="#38c8e0"/><rect x="1.00" y="6.33" width="4.5" height="4.5" fill="#e03838"/><rect x="6.33" y="6.33" width="4.5" height="4.5" fill="#c038b8"/><rect x="11.66" y="6.33" width="4.5" height="4.5" fill="#38b838"/><rect x="1.00" y="11.66" width="4.5" height="4.5" fill="#e8c020"/><rect x="6.33" y="11.66" width="4.5" height="4.5" fill="#98d828"/><rect x="11.66" y="11.66" width="4.5" height="4.5" fill="#e83878"/></svg><svg style="left:149px;top:483px;" width="16" height="16" viewBox="0 0 16 16"><path d="M8 0V16M0 8H16" stroke="#e0e0e0" stroke-width="1.8"/></svg><svg style="left:174px;top:483px;" width="16" height="16" viewBox="0 0 16 16"><path d="M2 14L3 10L12 1L15 4L6 13Z" stroke="#e0e0e0" stroke-width="1.4" fill="none"/><path d="M10 3L13 6" stroke="#e0e0e0" stroke-width="1.2"/></svg><svg style="left:199px;top:483px;" width="16" height="16" viewBox="0 0 16 16"><path d="M1 1H12L15 4V15H1Z" stroke="#e0e0e0" stroke-width="1.4" fill="none"/><rect x="4" y="1" width="7" height="4" stroke="#e0e0e0" stroke-width="1.2" fill="none"/><rect x="4" y="9" width="8" height="6" stroke="#e0e0e0" stroke-width="1.2" fill="none"/></svg><svg style="left:224px;top:483px;" width="16" height="16" viewBox="0 0 16 16"><path d="M0.7 0.7H15.3V15.3H0.7ZM5.5 0.7V15.3M10.5 0.7V15.3M0.7 5.5H15.3M0.7 10.5H15.3" stroke="#e0e0e0" stroke-width="1.3" fill="none"/></svg><svg style="left:250px;top:482px;" width="14" height="17" viewBox="0 0 14 17"><rect x="0" y="2.5" width="14" height="1.8" fill="#e0e0e0"/><path d="M4.5 2.5V1H9.5V2.5" stroke="#e0e0e0" stroke-width="1.2" fill="none"/><path d="M1.5 5.5H12.5L12 16.5H2Z" fill="#e0e0e0"/></svg><div style="left:271px;top:481px;width:22px;height:20px;border:1px solid #5a5a5a;border-radius:2px;background:#3e3e3e;box-shadow:inset 0 0 0 1px #343434"></div><svg style="left:277px;top:491px;" width="11" height="3" viewBox="0 0 11 3"><circle cx="1.5" cy="1.5" r="1.1" fill="#e0e0e0"/><circle cx="5.5" cy="1.5" r="1.1" fill="#e0e0e0"/><circle cx="9.5" cy="1.5" r="1.1" fill="#e0e0e0"/></svg><div style="left:243px;top:527px;width:53px;height:1px;background:#555"></div><div style="left:37px;top:507px;width:122px;height:21px;background:#434343;border:1px solid #575757;border-bottom:1px solid #575757;border-radius:3px 3px 0 0;box-shadow:inset 0 0 0 1px #3a3a3a"></div><div class="t" style="left:48.50px;top:513px;font-size:12px;color:#d8d8d8;transform:scaleX(0.9360);">Mixer Slider Docker</div><div style="left:160px;top:505px;width:83px;height:24px;background:#484848;border:1px solid #5a5a5a;border-bottom:none;border-radius:4px 4px 0 0;box-shadow:inset 0 0 0 1px #3c3c3c"></div><div style="left:161px;top:527px;width:81px;height:3px;background:#484848"></div><div class="t" style="left:171.00px;top:512px;font-size:12px;color:#d8d8d8;transform:scaleX(0.9295);">Docker Lock</div><svg style="left:38px;top:529px;" width="16" height="16" viewBox="0 0 16 16"><circle cx="8" cy="8" r="7.3" stroke="#e0e0e0" stroke-width="1.15" fill="none"/><rect x="4" y="8.2" width="8" height="3.7" fill="#e0e0e0"/><path d="M5.3 6.4A2.6 2.6 0 0 1 10.4 6.2V8.4" stroke="#e0e0e0" stroke-width="1.15" fill="none"/></svg><div class="t" style="left:61.00px;top:532px;font-size:12px;color:#dadada;transform:scaleX(0.8245);">Docker Lock</div><svg style="left:255px;top:530px;" width="14" height="14" viewBox="0 0 14 14"><path d="M5.5 0.5H13.5V8.5H9.5" stroke="#e6e6e6" stroke-width="1.2" fill="none"/><rect x="0.6" y="5.6" width="8.8" height="8.2" stroke="#e6e6e6" stroke-width="1.2" fill="none"/><path d="M5.5 5.5V0.5" stroke="#e6e6e6" stroke-width="1.2"/></svg><svg style="left:279px;top:532px;" width="10" height="10" viewBox="0 0 10 10"><path d="M0 0L10 10M10 0L0 10" stroke="#e6e6e6" stroke-width="1.3"/></svg><div style="left:105px;top:549px;width:120px;height:30px;background:#d95029;border-radius:2px"></div><svg style="left:157.0px;top:556.0px;" width="16" height="16" viewBox="0 0 16 16"><circle cx="8" cy="8" r="7.4" stroke="#f3d4c4" stroke-width="1.1" fill="none"/><rect x="4.6" y="7.9" width="6.8" height="3.5" fill="#eee2dc"/><path d="M5.9 7.9V6.9A2.1 2.1 0 0 1 10.1 6.9V7.9" stroke="#eee2dc" stroke-width="1.1" fill="none"/></svg><div style="left:73px;top:581px;width:30px;height:60px;background:#d95029;border-radius:2px"></div><svg style="left:80.0px;top:603.0px;" width="16" height="16" viewBox="0 0 16 16"><circle cx="8" cy="8" r="7.4" stroke="#f3d4c4" stroke-width="1.1" fill="none"/><rect x="4.6" y="7.9" width="6.8" height="3.5" fill="#eee2dc"/><path d="M5.9 7.9V6.9A2.1 2.1 0 0 1 10.1 6.9V7.9" stroke="#eee2dc" stroke-width="1.1" fill="none"/></svg><div style="left:105px;top:581px;width:120px;height:60px;background:#d95029;border-radius:2px"></div><svg style="left:157.0px;top:603.0px;" width="16" height="16" viewBox="0 0 16 16"><circle cx="8" cy="8" r="7.4" stroke="#f3d4c4" stroke-width="1.1" fill="none"/><rect x="4.6" y="7.9" width="6.8" height="3.5" fill="#eee2dc"/><path d="M5.9 7.9V6.9A2.1 2.1 0 0 1 10.1 6.9V7.9" stroke="#eee2dc" stroke-width="1.1" fill="none"/></svg><div style="left:227px;top:581px;width:30px;height:60px;background:#d95029;border-radius:2px"></div><svg style="left:234.0px;top:603.0px;" width="16" height="16" viewBox="0 0 16 16"><circle cx="8" cy="8" r="7.4" stroke="#f3d4c4" stroke-width="1.1" fill="none"/><rect x="4.6" y="7.9" width="6.8" height="3.5" fill="#eee2dc"/><path d="M5.9 7.9V6.9A2.1 2.1 0 0 1 10.1 6.9V7.9" stroke="#eee2dc" stroke-width="1.1" fill="none"/></svg><div style="left:105px;top:643px;width:120px;height:30px;background:#d95029;border-radius:2px"></div><svg style="left:157.0px;top:650.0px;" width="16" height="16" viewBox="0 0 16 16"><circle cx="8" cy="8" r="7.4" stroke="#f3d4c4" stroke-width="1.1" fill="none"/><rect x="4.6" y="7.9" width="6.8" height="3.5" fill="#eee2dc"/><path d="M5.9 7.9V6.9A2.1 2.1 0 0 1 10.1 6.9V7.9" stroke="#eee2dc" stroke-width="1.1" fill="none"/></svg><div style="left:506px;top:117px;width:2px;height:1px;background:#555"></div><div style="left:380px;top:97px;width:126px;height:21px;background:#434343;border:1px solid #575757;border-bottom:1px solid #575757;border-radius:3px 3px 0 0;box-shadow:inset 0 0 0 1px #3a3a3a"></div><div class="t" style="left:393.00px;top:103px;font-size:12px;color:#d8d8d8;transform:scaleX(0.9417);">Chromatic Aberrat...</div><div style="left:301px;top:95px;width:78px;height:24px;background:#484848;border:1px solid #5a5a5a;border-bottom:none;border-radius:4px 4px 0 0;box-shadow:inset 0 0 0 1px #3c3c3c"></div><div style="left:302px;top:117px;width:76px;height:3px;background:#484848"></div><div class="t" style="left:312.50px;top:102px;font-size:12px;color:#d8d8d8;transform:scaleX(0.9116);">Color Pic...</div><svg style="left:301.5px;top:119.5px;" width="16" height="16" viewBox="0 0 16 16"><circle cx="8" cy="8" r="7.3" stroke="#e0e0e0" stroke-width="1.15" fill="none"/><rect x="4" y="8.2" width="8" height="3.7" fill="#e0e0e0"/><path d="M5.3 6.4A2.6 2.6 0 0 1 10.4 6.2V8.4" stroke="#e0e0e0" stroke-width="1.15" fill="none"/></svg><div class="t" style="left:324.50px;top:121.5px;font-size:12px;color:#dadada;transform:scaleX(0.9333);">Color Picker</div><svg style="left:468px;top:120.5px;" width="14" height="14" viewBox="0 0 14 14"><path d="M5.5 0.5H13.5V8.5H9.5" stroke="#e6e6e6" stroke-width="1.2" fill="none"/><rect x="0.6" y="5.6" width="8.8" height="8.2" stroke="#e6e6e6" stroke-width="1.2" fill="none"/><path d="M5.5 5.5V0.5" stroke="#e6e6e6" stroke-width="1.2"/></svg><svg style="left:492px;top:122.5px;" width="10" height="10" viewBox="0 0 10 10"><path d="M0 0L10 10M10 0L0 10" stroke="#e6e6e6" stroke-width="1.3"/></svg><div class="t" style="left:321.50px;top:140px;font-size:12px;color:#d8d8d8;transform:scaleX(0.9831);">Foreground</div><div class="t" style="left:424.50px;top:140px;font-size:12px;color:#d8d8d8;transform:scaleX(0.9446);">Background</div><div style="left:301px;top:154px;width:102px;height:16px;background:#111113;border:1px solid #5c5c5c"></div><div style="left:405px;top:154px;width:101px;height:16px;background:#e8e0dd;border:1px solid #5c5c5c"></div><svg style="left:508.5px;top:94px;" width="16" height="16" viewBox="0 0 16 16"><circle cx="8" cy="8" r="7.3" stroke="#e0e0e0" stroke-width="1.15" fill="none"/><rect x="4" y="8.2" width="8" height="3.7" fill="#e0e0e0"/><path d="M5.3 6.4A2.6 2.6 0 0 1 10.4 6.2V8.4" stroke="#e0e0e0" stroke-width="1.15" fill="none"/></svg><div class="t" style="left:531.50px;top:97px;font-size:12px;color:#dadada;transform:scaleX(0.9357);">Brush Blend Modes</div><svg style="left:644px;top:95px;" width="14" height="14" viewBox="0 0 14 14"><path d="M5.5 0.5H13.5V8.5H9.5" stroke="#e6e6e6" stroke-width="1.2" fill="none"/><rect x="0.6" y="5.6" width="8.8" height="8.2" stroke="#e6e6e6" stroke-width="1.2" fill="none"/><path d="M5.5 5.5V0.5" stroke="#e6e6e6" stroke-width="1.2"/></svg><svg style="left:668px;top:97px;" width="10" height="10" viewBox="0 0 10 10"><path d="M0 0L10 10M10 0L0 10" stroke="#e6e6e6" stroke-width="1.3"/></svg><div style="left:517px;top:126px;width:30px;height:30px;background:#424242;border:1px solid #575757;border-radius:3px;box-shadow:inset 0 0 0 1px #383838"></div><svg style="left:517px;top:126px;" width="30" height="30" viewBox="0 0 30 30"><path d="M5.8 28.1V1.8H10L19.9 19.5V1.8H24V28.1H19.8L9.9 10.2V28.1Z" fill="#e2e2e2"/></svg><div style="left:559px;top:126px;width:30px;height:30px;background:#424242;border:1px solid #575757;border-radius:3px;box-shadow:inset 0 0 0 1px #383838"></div><svg style="left:559px;top:126px;" width="30" height="30" viewBox="0 0 30 30"><path d="M1 22.5L5 6.8H8.4L12.4 22.5H9.2L8.4 19H5L4.2 22.5Z M5.7 15.8H7.7L6.7 11Z" fill="#e2e2e2" fill-rule="evenodd"/><circle cx="16.4" cy="16" r="1.6" fill="#e2e2e2"/><path d="M20.4 8.8H24.5Q28.6 8.8 28.6 12.3Q28.6 14.5 26.8 15.3Q29.3 16.2 29.2 19.2Q29 22.9 24.7 22.9H20.4Z M23.6 11.6V14.3H24.6Q25.6 14.3 25.6 12.9Q25.6 11.6 24.6 11.6Z M23.6 17V20.1H24.8Q26 20.1 26 18.5Q26 17 24.8 17Z" fill="#e2e2e2" fill-rule="evenodd"/></svg><div style="left:601px;top:126px;width:30px;height:30px;background:#424242;border:1px solid #575757;border-radius:3px;box-shadow:inset 0 0 0 1px #383838"></div><svg style="left:601px;top:126px;" width="30" height="30" viewBox="0 0 30 30"><path d="M2 3.6H5.6V22.6H16.5V26.1H2Z" fill="#e2e2e2"/><path d="M22 10.5V27.3H25.7V10.5H28.5L23.8 2L18.8 10.5Z" fill="#e2e2e2"/></svg><div style="left:643px;top:126px;width:30px;height:30px;background:#424242;border:1px solid #575757;border-radius:3px;box-shadow:inset 0 0 0 1px #383838"></div><svg style="left:643px;top:126px;" width="30" height="30" viewBox="0 0 30 30"><path d="M1.8 2.8H7Q16.6 2.8 16.6 14.5Q16.6 26.1 7 26.1H1.8Z M5.3 6.3V22.6H7Q13 22.6 13 14.5Q13 6.3 7 6.3Z" fill="#e2e2e2" fill-rule="evenodd"/><path d="M23 5.2V19.7H19L24.2 27.3L29.2 19.7H26.2V5.2Z" fill="#e2e2e2"/></svg><div style="left:300px;top:179px;width:383px;height:367px;background:#9a9a9a"></div><div style="left:300px;top:179px;width:8px;height:367px;background:#8c8c8c"></div><div style="left:308px;top:179px;width:2px;height:367px;background:#a3a3a3"></div><div style="left:674px;top:179px;width:1px;height:367px;background:#a3a3a3"></div><div style="left:675px;top:179px;width:8px;height:367px;background:#8a8a8a"></div><div style="left:683px;top:179px;width:5px;height:499px;background:#434343"></div><div style="left:296px;top:179px;width:4px;height:499px;background:#434343"></div><svg style="left:300px;top:179px;" width="383" height="367" viewBox="0 0 383 367"><defs><filter id="rough" x="-20%" y="-20%" width="140%" height="140%"><feTurbulence type="fractalNoise" baseFrequency="0.35" numOctaves="2" seed="3"/><feDisplacementMap in="SourceGraphic" scale="3.5"/></filter></defs><g filter="url(#rough)"><g fill="#cbcbcb">
<path d="M120 137 L126 134 L130 135 L135 136 L139 140 L144 145 L142 151 L143 156 L139 160 L133 163 L128 161 L122 162 L119 157 L118 150 L117 144 Z"/>
<path d="M119 244 L125 241 L131 242 L137 243 L141 248 L143 254 L141 259 L135 264 L128 265 L122 262 L118 257 L117 250 Z"/>
</g>
<path d="M194 138 Q216 162 217 200 Q218 238 194 258" stroke="#cbcbcb" stroke-width="19" fill="none" stroke-linecap="round"/></g></svg><div style="left:300px;top:546px;width:383px;height:6px;background:#484848"></div><svg style="left:301.5px;top:552px;" width="16" height="16" viewBox="0 0 16 16"><circle cx="8" cy="8" r="7.3" stroke="#e0e0e0" stroke-width="1.15" fill="none"/><rect x="4" y="8.2" width="8" height="3.7" fill="#e0e0e0"/><path d="M5.3 6.4A2.6 2.6 0 0 1 10.4 6.2V8.4" stroke="#e0e0e0" stroke-width="1.15" fill="none"/></svg><div class="t" style="left:324.50px;top:555px;font-size:12px;color:#dadada;transform:scaleX(0.8823);">Brush Presets</div><svg style="left:644px;top:553px;" width="14" height="14" viewBox="0 0 14 14"><path d="M5.5 0.5H13.5V8.5H9.5" stroke="#e6e6e6" stroke-width="1.2" fill="none"/><rect x="0.6" y="5.6" width="8.8" height="8.2" stroke="#e6e6e6" stroke-width="1.2" fill="none"/><path d="M5.5 5.5V0.5" stroke="#e6e6e6" stroke-width="1.2"/></svg><svg style="left:668px;top:555px;" width="10" height="10" viewBox="0 0 10 10"><path d="M0 0L10 10M10 0L0 10" stroke="#e6e6e6" stroke-width="1.3"/></svg><div style="left:301px;top:570px;width:280px;height:22px;background:#404040;border:1px solid #575757;border-radius:2px;box-shadow:inset 0 0 0 1px #383838"></div><div class="t" style="left:306.00px;top:576px;font-size:12px;color:#dcdcdc;transform:scaleX(1.0259);">work</div><svg style="left:566.0px;top:578.25px;" width="9" height="4.5" viewBox="0 0 9 4.5"><path d="M0 0L9 0L4.5 4.5Z" fill="#a8a8a8"/></svg><div style="left:583px;top:570px;width:50px;height:21px;background:#424242;border:1px solid #575757;border-radius:2px;box-shadow:inset 0 0 0 1px #383838"></div><svg style="left:588px;top:574px;" width="11" height="15" viewBox="0 0 11 15"><path d="M1 1H10V14L5.5 10L1 14Z" stroke="#e0e0e0" stroke-width="1.5" fill="none"/></svg><div class="t" style="left:603.00px;top:575px;font-size:12px;color:#d8d8d8;transform:scaleX(0.9040);">Tag</div><svg style="left:626.5px;top:585.75px;" width="5" height="2.5" viewBox="0 0 5 2.5"><path d="M0 0L5 0L2.5 2.5Z" fill="#a8a8a8"/></svg><svg style="left:640px;top:575px;" width="12" height="11" viewBox="0 0 12 11"><rect y="0" width="12" height="2" fill="#e0e0e0"/><rect y="4.5" width="12" height="2" fill="#e0e0e0"/><rect y="9" width="12" height="2" fill="#e0e0e0"/></svg><svg style="left:662px;top:571px;" width="16" height="17" viewBox="0 0 16 17"><rect x="0.6" y="0.6" width="14.8" height="15.8" stroke="#e0e0e0" stroke-width="1.2" fill="none"/><path d="M8 1.5L9 3L7 4.5L9 6L7 7.5L9 9" stroke="#e0e0e0" stroke-width="0.9" fill="none"/></svg><div style="left:301px;top:593px;width:357px;height:61px;background:#3a3a3a"></div><svg style="left:303px;top:594px;overflow:hidden" width="69" height="59" viewBox="0 0 69 59"><defs><filter id="bl2" x="-50%" y="-50%" width="200%" height="200%"><feGaussianBlur stdDeviation="1.6"/></filter><filter id="bl1" x="-50%" y="-50%" width="200%" height="200%"><feGaussianBlur stdDeviation="0.7"/></filter><filter id="bl4" x="-50%" y="-50%" width="200%" height="200%"><feGaussianBlur stdDeviation="3"/></filter></defs><rect width="69" height="59" fill="#d0d0d0"/>
<path d="M50 57Q18 58 15 46Q13 37 25 37Q34 38 36 45" stroke="#f4f4f4" stroke-width="3" fill="none" opacity="0.8" filter="url(#bl1)"/>
<path d="M44 58Q62 56 66 44" stroke="#e8e8e8" stroke-width="2" fill="none" opacity="0.6" filter="url(#bl1)"/>
<line x1="68" y1="-6" x2="39" y2="26" stroke="#262626" stroke-width="13" stroke-linecap="round"/>
<line x1="64" y1="-6" x2="37" y2="24" stroke="#4a4a4a" stroke-width="2" opacity="0.7"/>
<circle cx="19" cy="14" r="5" fill="#80c0f8" opacity="0.6" filter="url(#bl2)"/><path d="M19 9Q23 14 21.5 16.5Q19 18.5 16.5 16.5Q15.5 14 19 9Z" fill="#78c4fc"/></svg><svg style="left:374px;top:594px;overflow:hidden" width="69" height="59" viewBox="0 0 69 59"><defs><filter id="bl2" x="-50%" y="-50%" width="200%" height="200%"><feGaussianBlur stdDeviation="1.6"/></filter><filter id="bl1" x="-50%" y="-50%" width="200%" height="200%"><feGaussianBlur stdDeviation="0.7"/></filter><filter id="bl4" x="-50%" y="-50%" width="200%" height="200%"><feGaussianBlur stdDeviation="3"/></filter></defs><rect width="69" height="59" fill="#d0d0d0"/>
<ellipse cx="27" cy="48" rx="10" ry="9" fill="#ffffff" opacity="0.95" filter="url(#bl4)"/>
<line x1="74" y1="-4" x2="52" y2="17" stroke="#6a98d4" stroke-width="7" stroke-linecap="round"/>
<ellipse cx="41" cy="21" rx="15" ry="6" transform="rotate(-52 41 21)" fill="#f6f6f6" stroke="#8a8a8a" stroke-width="0.8"/>
<ellipse cx="39" cy="22" rx="9" ry="3" transform="rotate(-48 39 22)" fill="#dcdcdc" opacity="0.7"/>
<circle cx="19" cy="13" r="5" fill="#80c0f8" opacity="0.6" filter="url(#bl2)"/><path d="M19 8Q23 13 21.5 15.5Q19 17.5 16.5 15.5Q15.5 13 19 8Z" fill="#78c4fc"/></svg><div style="left:444px;top:594px;width:71px;height:59px;background:#5c7ca0"></div><svg style="left:448px;top:594px;overflow:hidden" width="63" height="59" viewBox="0 0 63 59"><defs><linearGradient id="g448" x1="0" y1="0" x2="1" y2="1"><stop offset="0" stop-color="#a8d0ee"/><stop offset="1" stop-color="#80b4dc"/></linearGradient></defs><rect width="63" height="59" fill="url(#g448)"/>
<text x="2" y="19" font-family="Liberation Sans" font-size="18.5" fill="#0c1020">15</text>
<path d="M16 52Q26 44 36 47Q38 54 42 53L63 43" stroke="#1a2a44" stroke-width="2.2" fill="none" stroke-dasharray="none"/>
<path d="M19 43L34 19L44 13L46 22L40 30Z" fill="#dfe6ee" opacity="0.95"/>
<path d="M19 43L34 19L40 18L38 28Z" fill="#8a98a8"/>
<circle cx="37" cy="22" r="1.8" fill="#1a2030"/>
<path d="M40 13L62 -6L69 2L48 22Z" fill="#222834"/>
<path d="M44 12L62 -4" stroke="#606a78" stroke-width="1.5"/></svg><svg style="left:516px;top:594px;overflow:hidden" width="69" height="59" viewBox="0 0 69 59"><defs><linearGradient id="g516" x1="0" y1="0" x2="1" y2="1"><stop offset="0" stop-color="#eeeeee"/><stop offset="1" stop-color="#cccccc"/></linearGradient></defs><rect width="69" height="59" fill="url(#g516)"/>
<text x="5" y="19" font-family="Liberation Sans" font-size="18.5" fill="#0c1020">30</text>
<path d="M19 52Q29 44 39 47Q41 54 45 53L69 43" stroke="#151515" stroke-width="2.2" fill="none" stroke-dasharray="none"/>
<path d="M22 43L37 19L47 13L49 22L43 30Z" fill="#dfe6ee" opacity="0.95"/>
<path d="M22 43L37 19L43 18L41 28Z" fill="#8a98a8"/>
<circle cx="40" cy="22" r="1.8" fill="#1a2030"/>
<path d="M43 13L65 -6L75 2L51 22Z" fill="#222834"/>
<path d="M47 12L65 -4" stroke="#606a78" stroke-width="1.5"/></svg><svg style="left:587px;top:594px;overflow:hidden" width="69" height="59" viewBox="0 0 69 59"><defs><linearGradient id="t5r" x1="0" y1="0" x2="1" y2="1"><stop offset="0" stop-color="#c4c4c4"/><stop offset="1" stop-color="#b0b0b0"/></linearGradient><filter id="t5b" x="-50%" y="-50%" width="200%" height="200%"><feGaussianBlur stdDeviation="4"/></filter><linearGradient id="t5s" x1="0" y1="0" x2="1" y2="0"><stop offset="0" stop-color="#000"/><stop offset="0.45" stop-color="#000"/><stop offset="0.7" stop-color="#000" stop-opacity="0.45"/><stop offset="1" stop-color="#000" stop-opacity="0"/></linearGradient></defs><rect width="69" height="59" fill="url(#t5r)"/><ellipse cx="32" cy="29" rx="24" ry="26" transform="rotate(12 32 29)" fill="url(#t5s)" filter="url(#t5b)"/><ellipse cx="23" cy="28.5" rx="18" ry="27" transform="rotate(14 23 28.5)" fill="#000"/></svg><div style="left:657px;top:593px;width:7px;height:61px;background:#3c3c3c"></div><div style="left:664px;top:593px;width:19px;height:61px;background:#454545"></div><div style="left:668px;top:594px;width:13px;height:13px;background:#474747;border:1px solid #585858"></div><svg style="left:671.0px;top:598.75px;" width="7" height="3.5" viewBox="0 0 7 3.5"><path d="M0 3.5L7 3.5L3.5 0Z" fill="#9a9a9a"/></svg><div style="left:668px;top:611px;width:13px;height:26px;background:#444;border:1px solid #585858"></div><div style="left:668px;top:640px;width:13px;height:13px;background:#474747;border:1px solid #585858"></div><svg style="left:671.0px;top:644.75px;" width="7" height="3.5" viewBox="0 0 7 3.5"><path d="M0 0L7 0L3.5 3.5Z" fill="#9a9a9a"/></svg><div style="left:301px;top:655px;width:290px;height:21px;background:#3c3c3c;border:1px solid #363636"></div><div class="t" style="left:305.00px;top:660px;font-size:12px;color:#8a8a8a;transform:scaleX(0.8677);">Search</div><div style="left:597px;top:658px;width:14px;height:13px;background:#3c3c3c"></div><svg style="left:598px;top:659px;" width="12" height="11" viewBox="0 0 12 11"><path d="M2 5L5 9L10 1" stroke="#e0e0e0" stroke-width="1.4" fill="none"/></svg><div class="t" style="left:617.00px;top:659px;font-size:12px;color:#d8d8d8;transform:scaleX(0.9545);">Filter in Tag</div><svg style="left:691px;top:94px;" width="16" height="16" viewBox="0 0 16 16"><circle cx="8" cy="8" r="7.3" stroke="#e0e0e0" stroke-width="1.15" fill="none"/><rect x="4" y="8.2" width="8" height="3.7" fill="#e0e0e0"/><path d="M5.3 6.4A2.6 2.6 0 0 1 10.4 6.2V8.4" stroke="#e0e0e0" stroke-width="1.15" fill="none"/></svg><div class="t" style="left:714.00px;top:97px;font-size:12px;color:#dadada;transform:scaleX(0.9895);">Tool Options</div><svg style="left:949px;top:95px;" width="14" height="14" viewBox="0 0 14 14"><path d="M5.5 0.5H13.5V8.5H9.5" stroke="#e6e6e6" stroke-width="1.2" fill="none"/><rect x="0.6" y="5.6" width="8.8" height="8.2" stroke="#e6e6e6" stroke-width="1.2" fill="none"/><path d="M5.5 5.5V0.5" stroke="#e6e6e6" stroke-width="1.2"/></svg><svg style="left:973px;top:97px;" width="10" height="10" viewBox="0 0 10 10"><path d="M0 0L10 10M10 0L0 10" stroke="#e6e6e6" stroke-width="1.3"/></svg><div class="t" style="left:693.50px;top:126px;font-size:12px;color:#d8d8d8;transform:scaleX(0.9540);">Brush Smoothing:</div><div style="left:817px;top:120px;width:167px;height:21px;background:#444444;border:1px solid #575757;border-radius:2px;box-shadow:inset 0 0 0 1px #383838"></div><div class="t" style="left:822.50px;top:125px;font-size:12px;color:#dcdcdc;transform:scaleX(0.8349);">Basic</div><svg style="left:968.5px;top:128.0px;" width="8" height="4.0" viewBox="0 0 8 4.0"><path d="M0 0L8 0L4.0 4.0Z" fill="#a8a8a8"/></svg><div style="left:691px;top:146px;width:293px;height:1px;background:#333"></div><div style="left:693px;top:156px;width:14px;height:14px;background:#3d3d3d;border-radius:1px"></div><div class="t" style="left:712.50px;top:159px;font-size:12px;color:#d8d8d8;transform:scaleX(0.9419);">Snap to Assistants</div><svg style="left:691px;top:310px;" width="16" height="16" viewBox="0 0 16 16"><circle cx="8" cy="8" r="7.3" stroke="#e0e0e0" stroke-width="1.15" fill="none"/><rect x="4" y="8.2" width="8" height="3.7" fill="#e0e0e0"/><path d="M5.3 6.4A2.6 2.6 0 0 1 10.4 6.2V8.4" stroke="#e0e0e0" stroke-width="1.15" fill="none"/></svg><div class="t" style="left:714.00px;top:313px;font-size:12px;color:#dadada;transform:scaleX(0.9516);">Wide Gamut Color Selector</div><svg style="left:949px;top:311px;" width="14" height="14" viewBox="0 0 14 14"><path d="M5.5 0.5H13.5V8.5H9.5" stroke="#e6e6e6" stroke-width="1.2" fill="none"/><rect x="0.6" y="5.6" width="8.8" height="8.2" stroke="#e6e6e6" stroke-width="1.2" fill="none"/><path d="M5.5 5.5V0.5" stroke="#e6e6e6" stroke-width="1.2"/></svg><svg style="left:973px;top:313px;" width="10" height="10" viewBox="0 0 10 10"><path d="M0 0L10 10M10 0L0 10" stroke="#e6e6e6" stroke-width="1.3"/></svg><div style="left:698px;top:335px;width:15px;height:15px;background:#000"></div><div style="left:690px;top:327px;width:17px;height:17px;background:#d0d0d0;border:1.5px solid #f0f0f0;border-radius:2px;box-shadow:inset 0 0 0 1.3px #1e1e1e"></div><svg style="left:969px;top:333px;" width="15" height="13" viewBox="0 0 15 13"><rect y="0" width="14" height="2" fill="#e0e0e0"/><rect y="4.5" width="14" height="2" fill="#e0e0e0"/><rect y="9" width="14" height="2" fill="#e0e0e0"/></svg><svg style="left:982.0px;top:346.0px;" width="4" height="2.0" viewBox="0 0 4 2.0"><path d="M0 0L4 0L2.0 2.0Z" fill="#a8a8a8"/></svg><div style="left:771px;top:359px;width:135px;height:135px;border-radius:50%;background:conic-gradient(from 270deg,#f00,#ff0 60deg,#0f0 120deg,#0ff 180deg,#00f 240deg,#f0f 300deg,#f00 360deg);-webkit-mask:radial-gradient(circle,transparent 54.5px,#000 55.5px,#000 66.5px,transparent 67.5px);mask:radial-gradient(circle,transparent 54.5px,#000 55.5px,#000 66.5px,transparent 67.5px)"></div><div style="left:802px;top:390px;width:74px;height:73px;background:linear-gradient(to bottom,rgba(0,0,0,0),#000),linear-gradient(to right,#fff,#f00)"></div><svg style="left:798px;top:400px;" width="12" height="12" viewBox="0 0 12 12"><circle cx="6" cy="6" r="4.9" fill="none" stroke="#1e1e1e" stroke-width="1"/><circle cx="6" cy="6" r="3.9" fill="#c4c4c4" stroke="#eeeeee" stroke-width="1"/></svg><svg style="left:771px;top:420.5px;" width="12" height="12" viewBox="0 0 12 12"><circle cx="6" cy="6" r="4.9" fill="none" stroke="#1e1e1e" stroke-width="1"/><circle cx="6" cy="6" r="3.9" fill="#c4c4c4" stroke="#eeeeee" stroke-width="1"/></svg><div style="left:690px;top:502px;width:298px;height:153px;background:#3a3a3a"></div><div style="left:690px;top:502px;width:144px;height:50px;background:#cfcfcf"></div><div style="left:690px;top:553px;width:144px;height:50px;background:#cfcfcf"></div><div style="left:690px;top:604px;width:144px;height:50px;background:linear-gradient(to right,#a0a0a0,#cdcdcd)"></div><div style="left:835px;top:502px;width:7px;height:50px;background:#cccccc"></div><div style="left:835px;top:553px;width:7px;height:50px;background:#cccccc"></div><div style="left:835px;top:604px;width:7px;height:50px;background:#cccccc"></div><div style="left:843px;top:502px;width:144px;height:50px;background:#cccccc"></div><div style="left:843px;top:553px;width:144px;height:50px;background:linear-gradient(to right,#cfcfcf,#cf8a8a)"></div><div style="left:843px;top:604px;width:144px;height:50px;background:linear-gradient(to right,#cbcbcb,#ffffff)"></div><svg style="left:971px;top:660px;" width="15" height="15" viewBox="0 0 15 15"><path d="M9.98 2.17A5.88 5.88 0 0 0 2.17 9.98" stroke="#d8d8d8" stroke-width="1.8" fill="none"/><path d="M3.49 11.80L-0.07 10.71L4.24 8.88Z" fill="#d8d8d8"/><path d="M5.02 12.83A5.88 5.88 0 0 0 12.83 5.02" stroke="#d8d8d8" stroke-width="1.8" fill="none"/><path d="M11.51 3.20L15.07 4.29L10.76 6.12Z" fill="#d8d8d8"/></svg><div style="left:33px;top:380px;width:2px;height:2px;background:#a8a8a8;opacity:0.8"></div><div style="left:33px;top:383px;width:2px;height:2px;background:#a8a8a8;opacity:0.8"></div><div style="left:33px;top:386px;width:2px;height:2px;background:#a8a8a8;opacity:0.8"></div><div style="left:33px;top:389px;width:2px;height:2px;background:#a8a8a8;opacity:0.8"></div><div style="left:33px;top:392px;width:2px;height:2px;background:#a8a8a8;opacity:0.8"></div><div style="left:33px;top:395px;width:2px;height:2px;background:#a8a8a8;opacity:0.8"></div></body></html>
